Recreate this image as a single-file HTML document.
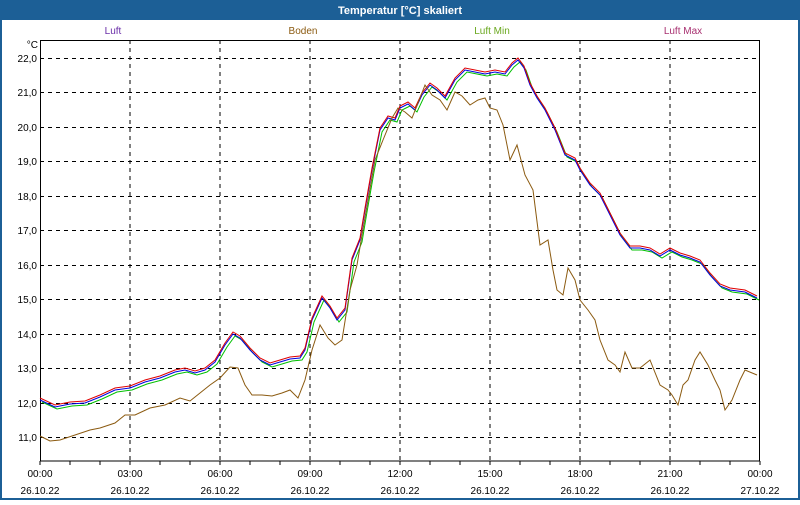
<!DOCTYPE html>
<html><head><meta charset="utf-8"><style>
body{margin:0;width:800px;height:500px;overflow:hidden;background:#fff;font-family:"Liberation Sans",sans-serif}
</style></head><body>
<svg width="800" height="500" xmlns="http://www.w3.org/2000/svg" font-family="Liberation Sans, sans-serif" font-size="10">
<rect x="0" y="0" width="800" height="500" fill="#1c5f96"/>
<rect x="2" y="20" width="796" height="478" fill="#fff"/>
<text x="400" y="14" fill="#fff" font-weight="bold" font-size="11" text-anchor="middle">Temperatur [°C] skaliert</text>
<text x="113" y="34" fill="#6a2ea8" text-anchor="middle">Luft</text>
<text x="303" y="34" fill="#8b5a10" text-anchor="middle">Boden</text>
<text x="492" y="34" fill="#6aa81e" text-anchor="middle">Luft Min</text>
<text x="683" y="34" fill="#a83070" text-anchor="middle">Luft Max</text>
<g stroke="#000" stroke-dasharray="4,4" stroke-width="1">
<path d="M130 40V461M220 40V461M310 40V461M400 40V461M490 40V461M580 40V461M670 40V461"/>
<path d="M40 58.5H760M40 92.5H760M40 127.5H760M40 161.5H760M40 196.5H760M40 230.5H760M40 265.5H760M40 299.5H760M40 334.5H760M40 368.5H760M40 403.5H760M40 437.5H760"/>
</g>
<rect x="40.5" y="40.5" width="719" height="420.5" fill="none" stroke="#000"/>
<g stroke="#000"><path d="M40 461v4M70 461v4M100 461v4M130 461v4M160 461v4M190 461v4M220 461v4M250 461v4M280 461v4M310 461v4M340 461v4M370 461v4M400 461v4M430 461v4M460 461v4M490 461v4M520 461v4M550 461v4M580 461v4M610 461v4M640 461v4M670 461v4M700 461v4M730 461v4M760 461v4"/></g>
<g text-anchor="end" fill="#000">
<text x="38" y="48">°C</text>
<text x="37" y="62">22,0</text><text x="37" y="96">21,0</text><text x="37" y="131">20,0</text><text x="37" y="165">19,0</text><text x="37" y="200">18,0</text><text x="37" y="234">17,0</text><text x="37" y="269">16,0</text><text x="37" y="303">15,0</text><text x="37" y="338">14,0</text><text x="37" y="372">13,0</text><text x="37" y="407">12,0</text><text x="37" y="441">11,0</text>
</g>
<g text-anchor="middle" fill="#000">
<text x="40" y="477">00:00</text><text x="130" y="477">03:00</text><text x="220" y="477">06:00</text><text x="310" y="477">09:00</text><text x="400" y="477">12:00</text><text x="490" y="477">15:00</text><text x="580" y="477">18:00</text><text x="670" y="477">21:00</text><text x="760" y="477">00:00</text>
<text x="40" y="494">26.10.22</text><text x="130" y="494">26.10.22</text><text x="220" y="494">26.10.22</text><text x="310" y="494">26.10.22</text><text x="400" y="494">26.10.22</text><text x="490" y="494">26.10.22</text><text x="580" y="494">26.10.22</text><text x="670" y="494">26.10.22</text><text x="760" y="494">27.10.22</text>
</g>
<defs><polyline id="m" fill="none" points="40,400 55,407 70,404 85,403 100,397 115,390 130,388 145,382 160,378 175,372 185,370 195,373 205,370 215,362 225,345 233,334 240,338 250,350 260,360 270,365 280,362 290,359 300,358 305,350 312,320 322,298 330,308 337,320 345,310 352,260 360,240 365,210 372,170 380,130 388,118 395,120 400,108 408,104 415,110 422,95 430,85 437,90 445,98 455,80 465,70 475,72 485,74 495,72 505,74 512,65 518,60 524,68 530,85 537,98 545,110 555,130 565,155 575,160 580,170 590,185 600,195 610,215 620,235 630,248 640,248 650,250 660,256 670,250 680,255 690,258 700,262 710,275 720,286 730,290 745,292 757,298"/></defs>
<use href="#m" stroke="#00c000" transform="translate(2,2)"/>
<use href="#m" stroke="#0000e0"/>
<use href="#m" stroke="#e00000" transform="translate(0,-2)"/>
<polyline fill="none" stroke="#8b5a10" points="40,436 50,441 60,440 75,435 90,430 100,428 115,423 125,415 135,415 150,408 165,405 180,398 190,401 200,393 210,385 220,378 230,367 238,368 245,385 252,395 262,395 272,396 282,393 290,390 298,398 305,380 312,350 320,325 328,338 335,345 342,340 350,290 357,265 362,235 368,200 375,160 383,140 392,118 398,108 405,112 412,118 418,103 425,85 432,95 440,100 447,110 455,92 462,96 470,105 478,100 485,98 490,108 497,110 503,125 510,160 517,145 525,175 533,190 540,245 548,240 553,270 557,290 563,295 568,268 575,280 580,300 588,310 595,320 600,340 608,360 615,365 620,372 625,352 632,368 640,368 650,360 660,385 668,390 672,395 678,405 683,385 688,380 695,360 700,352 708,365 715,380 720,390 725,410 732,400 740,380 745,370 757,375"/>
</svg>
</body></html>
